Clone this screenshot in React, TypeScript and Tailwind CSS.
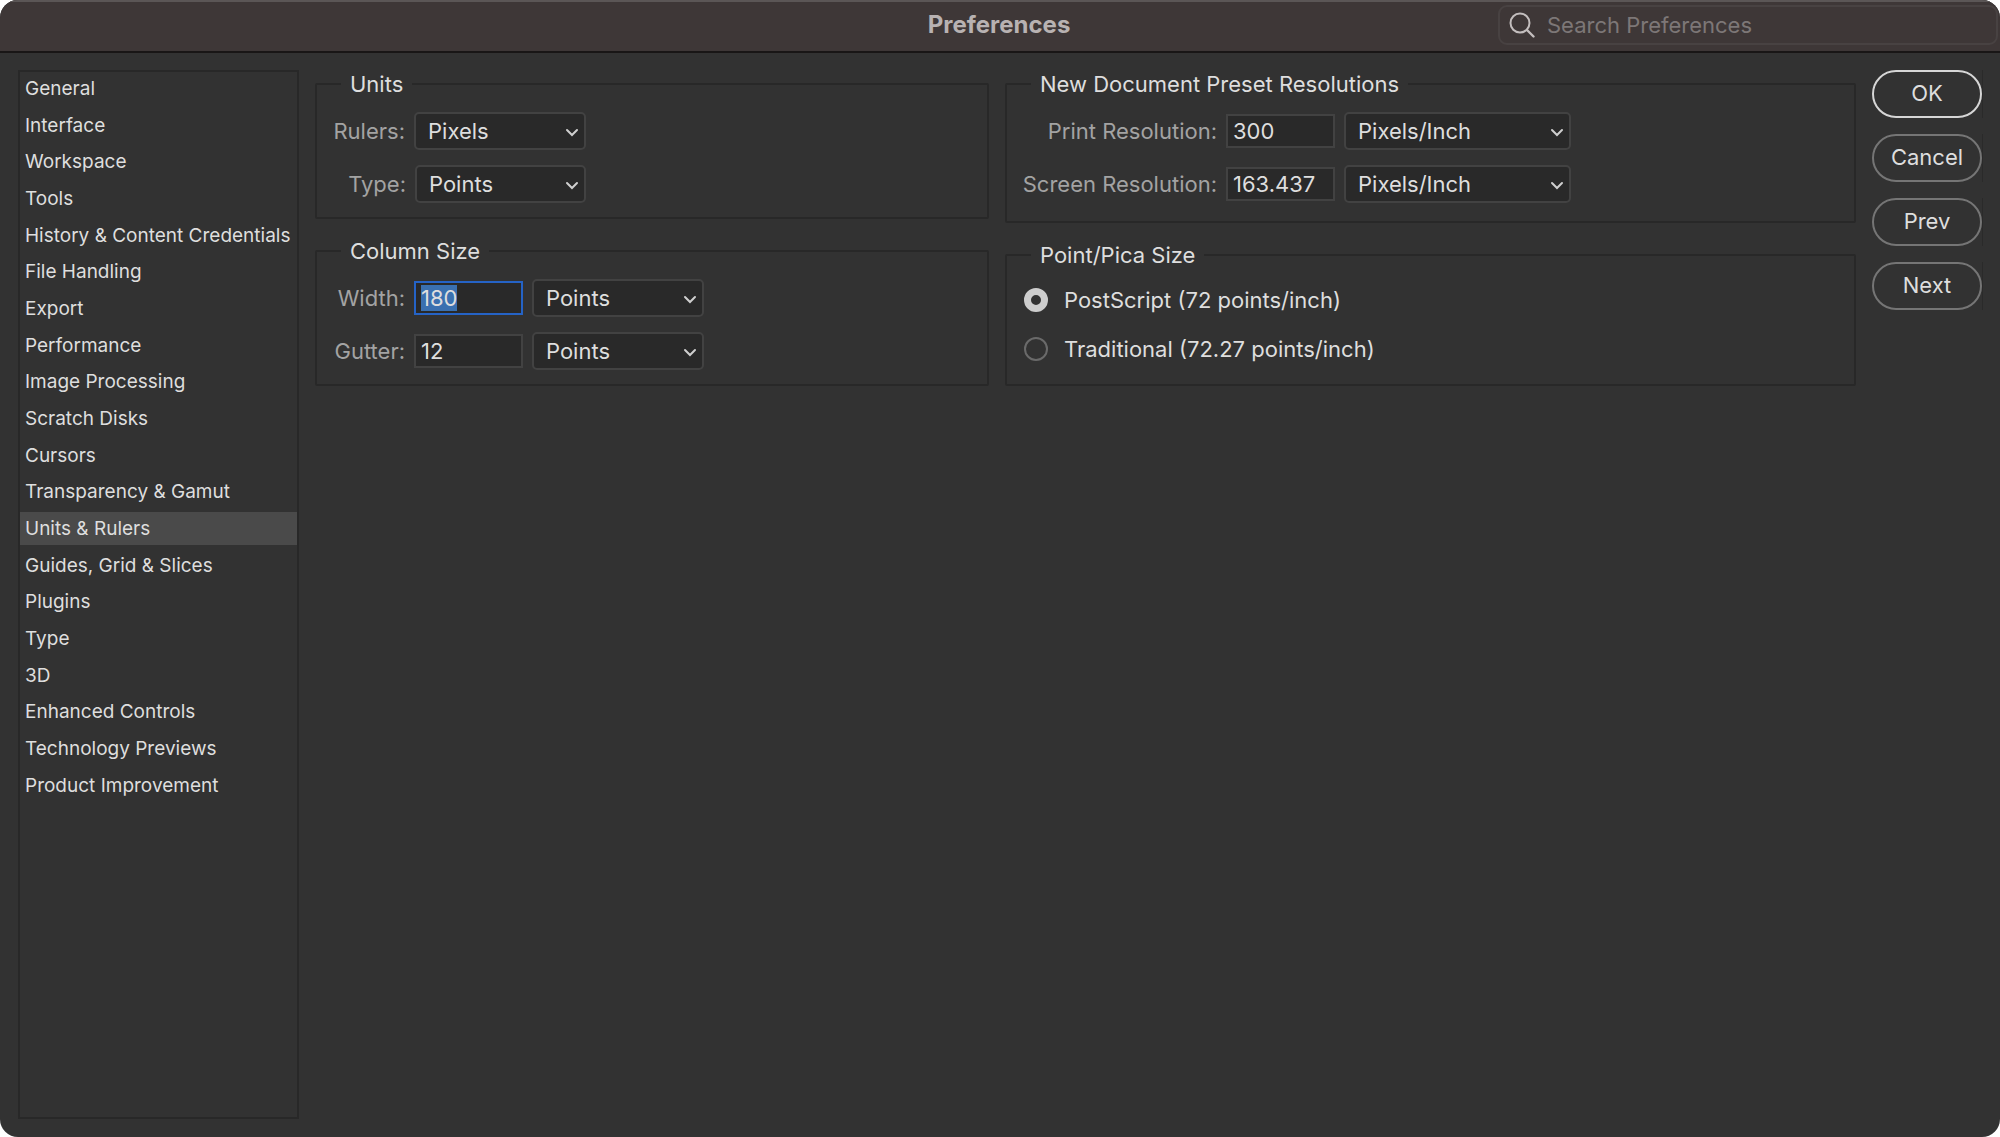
import { useEffect, useRef, type ReactNode, type Ref } from 'react';

const SECTIONS = [
  'General',
  'Interface',
  'Workspace',
  'Tools',
  'History & Content Credentials',
  'File Handling',
  'Export',
  'Performance',
  'Image Processing',
  'Scratch Disks',
  'Cursors',
  'Transparency & Gamut',
  'Units & Rulers',
  'Guides, Grid & Slices',
  'Plugins',
  'Type',
  '3D',
  'Enhanced Controls',
  'Technology Previews',
  'Product Improvement',
];

export default function App() {
  return (
    <div className="flex min-h-screen flex-col overflow-hidden rounded-[18px] bg-[#323232] font-['Inter','Liberation_Sans',sans-serif] text-[22px] text-[#dedede]">
      <TitleBar />
      <div className="flex flex-1 gap-4 pt-[17px] pr-[17px] pb-[18px] pl-[18px]">
        <Sidebar active="Units & Rulers" />
        <main className="grid flex-1 grid-cols-[674fr_851fr] items-start gap-4">
          <div className="flex flex-col gap-[18px]">
            <Group title="Units">
              <Row id="rulers" label="Rulers:" labelWidth="w-[88px]">
                <Select id="rulers" value="Pixels" options={['Pixels', 'Inches', 'Points']} width="w-[172px]" />
              </Row>
              <Row id="type" label="Type:" labelWidth="w-[89px]">
                <Select id="type" value="Points" options={['Pixels', 'Points', 'Millimeters']} width="w-[171px]" />
              </Row>
            </Group>
            <ColumnSize />
          </div>
          <div className="flex flex-col gap-[18px]">
            <Group title="New Document Preset Resolutions" bottom="pb-[18px]">
              <Row id="print" label="Print Resolution:" labelWidth="w-[210px]">
                <Field id="print" value="300" />
                <Select label="Print resolution unit" value="Pixels/Inch" options={['Pixels/Inch', 'Pixels/cm']} width="w-[227px]" />
              </Row>
              <Row id="screen" label="Screen Resolution:" labelWidth="w-[210px]">
                <Field id="screen" value="163.437" />
                <Select label="Screen resolution unit" value="Pixels/Inch" options={['Pixels/Inch', 'Pixels/cm']} width="w-[227px]" />
              </Row>
            </Group>
            <Group title="Point/Pica Size" bottom="pb-[18px]">
              <PicaOption label="PostScript (72 points/inch)" checked />
              <PicaOption label="Traditional (72.27 points/inch)" />
            </Group>
          </div>
        </main>
        <div className="flex flex-col gap-4">
          <ActionButton primary>OK</ActionButton>
          <ActionButton>Cancel</ActionButton>
          <ActionButton>Prev</ActionButton>
          <ActionButton>Next</ActionButton>
        </div>
      </div>
    </div>
  );
}

function TitleBar() {
  return (
    <header className="grid grid-cols-[1fr_auto_1fr] items-center border-t-2 border-b-2 border-t-[#5b5656] border-b-[#191616] bg-[#3e3737] pt-[3px] pr-[2px] pb-[6px]">
      <h1 className="col-start-2 text-[24px] leading-[28px] font-bold text-[#b8b2b2]">Preferences</h1>
      <div className="flex h-10 w-[500px] items-center gap-3 justify-self-end rounded-[9px] border-2 border-[#484242] pl-[9px]">
        <svg viewBox="0 0 26 26" className="size-[26px] text-[#c3bebe]" fill="none" stroke="currentColor" strokeWidth="2" strokeLinecap="round">
          <circle cx="11" cy="11" r="9.5" />
          <path d="M18 18l6.5 6.5" strokeWidth="2.4" />
        </svg>
        <input
          type="search"
          aria-label="Search Preferences"
          placeholder="Search Preferences"
          className="min-w-0 flex-1 bg-transparent leading-[28px] outline-none placeholder:text-[#7d7777]"
        />
      </div>
    </header>
  );
}

function Sidebar({ active }: { active: string }) {
  return (
    <nav className="w-[281px] border-2 border-[#282828]">
      <ul className="flex h-[730px] flex-col justify-between">
        {SECTIONS.map((name) => (
          <li key={name}>
            <button
              type="button"
              className={`block h-[33px] w-full pl-[5px] text-left text-[19px] leading-[33px] whitespace-nowrap ${name === active ? 'bg-[#4a4a4a]' : ''}`}
            >
              {name}
            </button>
          </li>
        ))}
      </ul>
    </nav>
  );
}

function ColumnSize() {
  const widthRef = useRef<HTMLInputElement>(null);

  // the first editable value starts selected, ready to be typed over
  useEffect(() => {
    widthRef.current?.focus();
    widthRef.current?.select();
  }, []);

  return (
    <Group title="Column Size">
      <Row id="width" label="Width:" labelWidth="w-[88px]">
        <Field id="width" value="180" inputRef={widthRef} />
        <Select label="Width unit" value="Points" options={['Pixels', 'Points', 'Picas']} width="w-[172px]" />
      </Row>
      <Row id="gutter" label="Gutter:" labelWidth="w-[88px]">
        <Field id="gutter" value="12" />
        <Select label="Gutter unit" value="Points" options={['Pixels', 'Points', 'Picas']} width="w-[172px]" />
      </Row>
    </Group>
  );
}

function Group({ title, bottom = 'pb-[14px]', children }: { title: string; bottom?: string; children: ReactNode }) {
  return (
    <fieldset className={`rounded-[2px] border-2 border-[#282828] ${bottom}`}>
      <legend className="ml-6 px-[9px] leading-[28px]">{title}</legend>
      <div className="flex flex-col gap-[15px] pt-[14px]">{children}</div>
    </fieldset>
  );
}

function Row({ id, label, labelWidth, children }: { id: string; label: string; labelWidth: string; children: ReactNode }) {
  return (
    <div className="flex items-center gap-[9px]">
      <label htmlFor={id} className={`${labelWidth} text-right leading-[28px] whitespace-nowrap text-[#a3a3a3]`}>
        {label}
      </label>
      {children}
    </div>
  );
}

function Field({ id, value, inputRef }: { id: string; value: string; inputRef?: Ref<HTMLInputElement> }) {
  return (
    <input
      id={id}
      ref={inputRef}
      type="text"
      defaultValue={value}
      className="h-[34px] w-[109px] border-2 border-[#424242] bg-[#292929] pl-[5px] leading-[28px] outline-none selection:bg-[#3a70b0] selection:text-[#dedede] focus:border-[#2563c6]"
    />
  );
}

interface SelectProps {
  id?: string;
  label?: string;
  value: string;
  options: string[];
  width: string;
}

function Select({ id, label, value, options, width }: SelectProps) {
  return (
    <div className={`relative ${width}`}>
      <select
        id={id}
        aria-label={label}
        defaultValue={value}
        className="block h-[38px] w-full appearance-none rounded-[5px] border-2 border-[#424242] bg-[#292929] pl-3 outline-none"
      >
        {options.map((o) => (
          <option key={o}>{o}</option>
        ))}
      </select>
      <svg viewBox="0 0 14 9" className="pointer-events-none absolute top-4 right-[7px] h-[9px] w-[14px]" fill="none" stroke="#cfcfcf" strokeWidth="2" strokeLinecap="round">
        <path d="M2 2l5 5 5-5" />
      </svg>
    </div>
  );
}

function PicaOption({ label, checked = false }: { label: string; checked?: boolean }) {
  return (
    <label className="flex items-center gap-4 py-[3px] pl-[17px] leading-[28px]">
      <input
        type="radio"
        name="pica"
        defaultChecked={checked}
        className="size-6 appearance-none rounded-full border-2 border-[#6a6a6a] checked:border-[7px] checked:border-[#cdcdcd]"
      />
      {label}
    </label>
  );
}

function ActionButton({ primary = false, children }: { primary?: boolean; children: ReactNode }) {
  return (
    <div className="border-r border-[#2a2a2a]">
      <button
        type="button"
        className={`block h-12 w-[110px] rounded-full border-2 pb-[2px] ${primary ? 'border-[#d6d6d6]' : 'border-[#757575]'}`}
      >
        {children}
      </button>
    </div>
  );
}
